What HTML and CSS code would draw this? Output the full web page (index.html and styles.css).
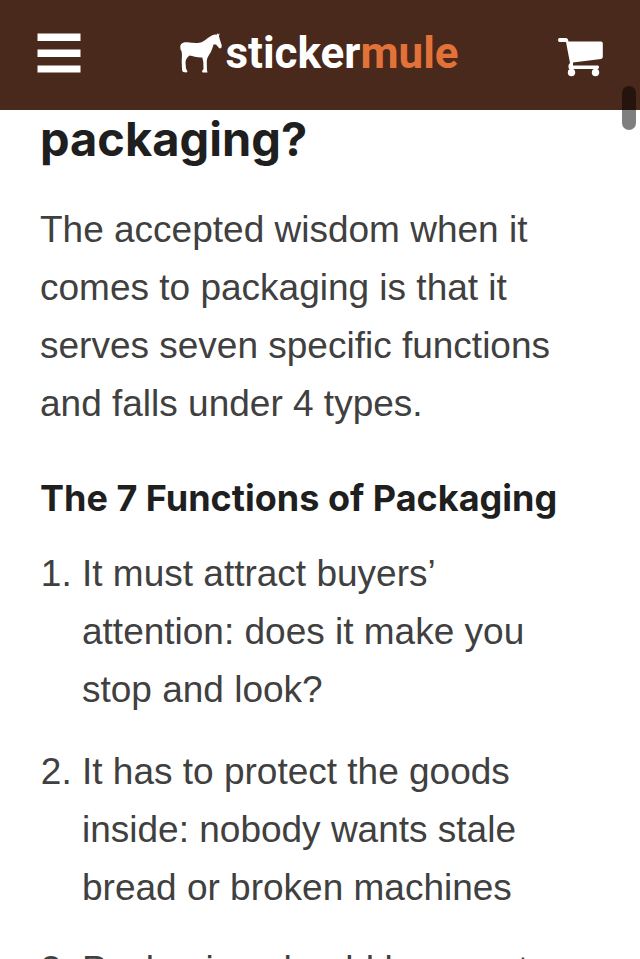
FILE: index.html
```html
<!DOCTYPE html>
<html lang="en">
<head>
<meta charset="utf-8">
<meta name="viewport" content="width=device-width, initial-scale=1">
<title>Packaging | Sticker Mule</title>
<link rel="stylesheet" href="styles.css">
</head>
<body>
<header class="topbar">
  <button class="icon-button" type="button" aria-label="Menu">
    <svg class="menu-icon" viewBox="0 0 44 40" aria-hidden="true"><path d="M.5 .5h43v7.500H.5zM.5 16.500h43v7.500H.5zM.5 32.500h43v7H.5z"/></svg>
  </button>
  <a class="logo" href="#" aria-label="Sticker Mule">
    <svg class="mule" viewBox="0 0 42 40" aria-hidden="true"><path d="M.3 14C.3 10.500 3 9 7.500 9.300C13 10 18 10.800 22 9C27 6.500 29.500 2.500 35 1.500L36.800 1.800L37 0L38 1.500L39.500 .3L39 3.500L40 7L41.800 12.500L41.300 15L39.500 15.500L36 11.500L33.500 11.500C32.500 15 31.500 18.500 29 22C27.200 24.500 26.700 27 26.800 30L26.900 36.500L27.500 39.500L22.500 39.500L22 38L23.500 36L23.300 29L22.300 24.500C18 25 13 23 9.500 22.500C6.500 25 5.500 27 5.500 29.500L6 35.500L7.500 38.500L6.500 39.500L3 39L2 37L1.700 28C1.800 25 2.300 22 1.500 18C.5 17 .3 15.500 .3 14Z"/></svg>
    <span class="wordmark">sticker<span class="wordmark-accent">mule</span></span>
  </a>
  <a class="icon-button" href="#" aria-label="Cart">
    <svg class="cart-icon" viewBox="0 -10 45 49" aria-hidden="true"><path d="M1.500 0H8Q9.500 0 10 1.500L10.500 3.500H43Q44.800 3.500 44.800 5.500V19Q44.800 20.500 43 21L15 24.500V27.500H40Q41 27.500 41 29T40 31H12Q10.500 31 10.500 29.500V27L12 25L8 4H1.500Q0 4 0 2T1.500 0Z"/><circle cx="13.500" cy="34.500" r="3.700"/><circle cx="37.500" cy="34.500" r="3.700"/></svg>
  </a>
  <span class="scroll-thumb"></span>
</header>
<main class="article">
  <h2 class="title">packaging?</h2>
  <p class="intro">The accepted wisdom when it comes to packaging is that it serves seven specific functions and falls under 4 types.</p>
  <h3 class="subtitle">The 7 Functions of Packaging</h3>
  <ol class="functions">
    <li>It must attract buyers’ attention: does it make you stop and look?</li>
    <li>It has to protect the goods inside: nobody wants stale bread or broken machines</li>
    <li>Packaging should be smart</li>
  </ol>
</main>
</body>
</html>
```
FILE: styles.css
```css
* {
  box-sizing: border-box;
}

html {
  overflow: hidden;
}

body {
  margin: 0;
  background: #fff;
  color: #404040;
  font: 37px/58px "Liberation Sans", Arial, sans-serif;
}

.topbar {
  position: relative;
  display: flex;
  align-items: center;
  justify-content: space-between;
  height: 110px;
  padding: 0 37px 5px;
  background: #48291b;
}

.icon-button {
  display: flex;
  padding: 0;
  border: 0;
  background: none;
}

svg {
  display: block;
  fill: #fff;
}

.menu-icon {
  width: 44px;
  height: 40px;
}

.cart-icon {
  width: 45px;
  height: 49px;
}

.logo {
  display: flex;
  align-items: center;
  gap: 3px;
  color: #fff;
  text-decoration: none;
}

.mule {
  width: 42px;
  height: 40px;
}

.wordmark {
  font: bold 44px/52px Roboto, sans-serif;
}

.wordmark-accent {
  color: #e27239;
}

.scroll-thumb {
  position: absolute;
  top: 86px;
  right: 4px;
  width: 14px;
  height: 44px;
  border-radius: 7px;
  background: rgba(0, 0, 0, 0.5);
}

.article {
  padding: 0 56px 0 40px;
}

.title,
.subtitle {
  margin: 0;
  color: #1f1f1f;
  font-family: Inter, sans-serif;
  font-weight: 700;
}

.title {
  font-size: 47px;
  line-height: 58px;
}

.intro {
  margin: 33px 0 36px;
}

.subtitle {
  font-size: 36px;
  line-height: 58px;
  white-space: nowrap;
}

.functions {
  margin: 18px 0 0;
  padding-left: 42px;
}

.functions li {
  margin-bottom: 24px;
}
```
